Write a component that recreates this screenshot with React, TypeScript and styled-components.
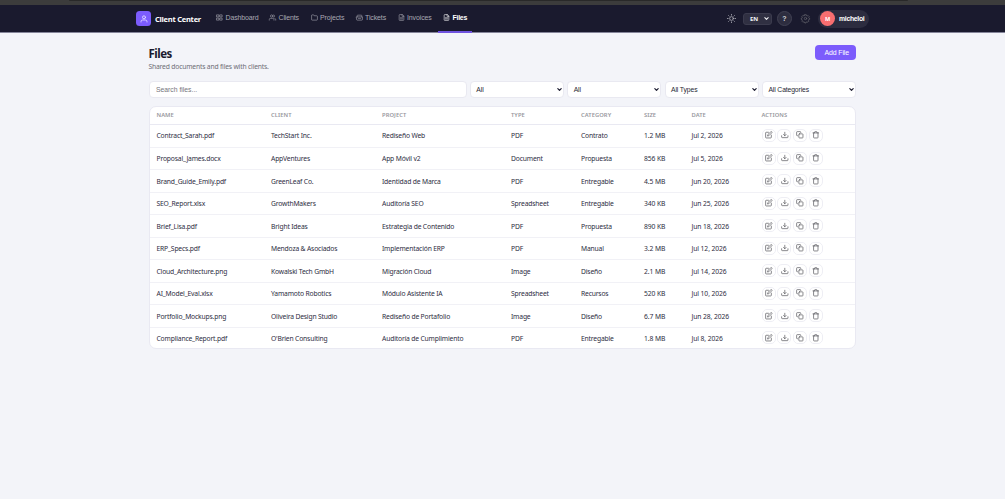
import React from "react";
import styled, { createGlobalStyle } from "styled-components";

const ui = `"Noto Sans", "Open Sans", sans-serif`;
const control = `"Liberation Sans", Arial, sans-serif`;

const Global = createGlobalStyle`
  * { box-sizing: border-box; }
  html, body { margin: 0; height: 100%; background: #f3f4f9; }
  body { font-family: ${ui}; color: #1a1a2e; overflow: hidden; }
  button, input, select { margin: 0; font-family: ${control}; }
`;

const WindowEdge = styled.div`
  height: 5px;
  padding: 0 97px 0 69px;
  background: #3c3c3c;
`;
const WindowEdgeShade = styled.div`
  height: 1px;
  background: #292929;
  border-radius: 0 0 2px 2px;
`;
const Header = styled.header`
  height: 28px;
  background: #1a1a2e;
  border-bottom: 1px solid #85859a;
  display: flex;
  align-items: center;
  padding: 0 136px;
`;
const LogoMark = styled.span`
  width: 15px;
  height: 15px;
  border-radius: 3.5px;
  background: #7c5cfc;
  display: flex;
  align-items: center;
  justify-content: center;
  color: #e4dcff;
`;
const Brand = styled.span`
  width: 55.5px;
  margin-left: 4px;
  font: 700 7.5px ${ui};
  letter-spacing: -0.24px;
  color: #fff;
  white-space: nowrap;
`;
const Nav = styled.nav`
  display: flex;
  align-self: stretch;
`;
const NavItem = styled.a<{ $width: number; $active?: boolean }>`
  width: ${(p) => p.$width}px;
  height: 28px;
  padding: 0 0 1px 5.5px;
  display: flex;
  align-items: center;
  gap: 2.5px;
  font: ${(p) => (p.$active ? 700 : 400)} 7px ${control};
  letter-spacing: ${(p) => (p.$active ? "-0.28px" : "-0.13px")};
  color: ${(p) => (p.$active ? "#fff" : "#a9a9b3")};
  border-bottom: 2px solid ${(p) => (p.$active ? "#6f53df" : "transparent")};
  white-space: nowrap;
`;
const Tools = styled.div`
  margin-left: auto;
  display: flex;
  align-items: center;
  color: #b9b9c2;
`;
const Language = styled.div`
  width: 29px;
  height: 12px;
  margin: 0 5px 0 7px;
  padding: 0 2px 0 6px;
  border: 1px solid #3b3b4d;
  border-radius: 3px;
  background: #303042;
  display: flex;
  align-items: center;
  justify-content: space-between;
  font: 700 6px ${ui};
  color: #f2f2f5;
`;
const Help = styled.button`
  width: 15px;
  height: 15px;
  padding: 0;
  border: 1px solid #414152;
  border-radius: 50%;
  background: #2d2d3f;
  font: 700 7px ${control};
  color: #cfcfd6;
  display: grid;
  place-items: center;
`;
const SettingsIcon = styled.span`
  display: flex;
  margin: 0 8.5px;
  color: #62626b;
`;
const User = styled.div`
  width: 51px;
  height: 18px;
  padding-left: 2px;
  border-radius: 9px;
  background: #2c2c3f;
  display: flex;
  align-items: center;
  gap: 4px;
  font: 700 6.8px ${control};
  letter-spacing: -0.27px;
  color: #fff;
`;
const Avatar = styled.span`
  width: 15px;
  height: 15px;
  border-radius: 50%;
  background: #f86e70;
  display: grid;
  place-items: center;
  font: 700 5.6px ${ui};
`;
const Main = styled.main`
  width: 707.5px;
  margin: 0 0 0 148.5px;
`;
const Heading = styled.div`
  height: 48px;
  display: flex;
  justify-content: space-between;
  padding-top: 12px;
`;
const Title = styled.h1`
  margin: 0;
  padding-top: 1px;
  font: 700 11.5px/16px ${ui};
  letter-spacing: -0.5px;
`;
const Subtitle = styled.p`
  margin: 0;
  font: 400 6.75px/10px ${ui};
  letter-spacing: -0.18px;
  color: #6e6e77;
`;
const AddButton = styled.button`
  width: 41.5px;
  height: 15px;
  padding: 0 0 0 3px;
  border: 0;
  border-radius: 4px;
  background: #7c5cfc;
  color: #fff;
  font: 400 6.9px ${control};
  letter-spacing: -0.08px;
`;
const Filters = styled.div`
  display: grid;
  grid-template-columns: 318px repeat(4, 94px);
  gap: 3.35px;
`;
const filterBox = `
  height: 17px;
  border: 1px solid #e9e9f1;
  border-radius: 4px;
  background: #fff;
  font: 400 6.8px ${control};
`;
const Search = styled.input`
  ${filterBox}
  width: 100%;
  padding: 0 6.5px;
  outline: 0;
  &::placeholder { color: #75757c; opacity: 1; }
`;
const Select = styled.button`
  ${filterBox}
  padding: 0 1px 0 5.5px;
  display: flex;
  align-items: center;
  justify-content: space-between;
  letter-spacing: -0.12px;
  color: #1f1f33;
`;
const Table = styled.section`
  margin-top: 8px;
  height: 243px;
  border: 1px solid #e9e9f2;
  border-radius: 7px;
  background: #fff;
  overflow: hidden;
`;
const Row = styled.div`
  height: 22.47px;
  padding-left: 7px;
  display: grid;
  grid-template-columns: 114.5px 111px 129px 70px 63px 47.5px 70px 1fr;
  align-items: center;
  font: 400 6.75px ${ui};
  letter-spacing: -0.17px;
  color: #2d2d42;
  white-space: nowrap;
  & + & { border-top: 1px solid #f1f1f6; }
`;
const HeadRow = styled(Row)`
  height: 17.5px;
  border-bottom: 1px solid #e9e9f2;
  font: 600 5.8px ${ui};
  letter-spacing: 0.06px;
  color: #98989e;
  & + ${Row} { border-top: 0; }
`;
const Cell = styled.span<{ $numeric?: boolean }>`
  padding-top: 0.4px;
  letter-spacing: ${(p) => (p.$numeric ? "-0.1px" : "inherit")};
`;
const Actions = styled.div`
  display: flex;
  gap: 1.8px;
  padding-bottom: 1px;
`;
const Action = styled.button`
  width: 14px;
  height: 13px;
  padding: 0;
  border: 1px solid #eeeef4;
  border-radius: 5px;
  background: #fff;
  color: #5c5c62;
  display: grid;
  place-items: center;
`;

const shapes = {
  user: <><circle cx="12" cy="7" r="4.5" /><path d="M3 21v-1a5 5 0 0 1 5-5h8a5 5 0 0 1 5 5v1" /></>,
  grid: <><rect x="3" y="3" width="7" height="7" /><rect x="14" y="3" width="7" height="7" /><rect x="3" y="14" width="7" height="7" /><rect x="14" y="14" width="7" height="7" /></>,
  clients: <><circle cx="9" cy="7" r="4" /><path d="M1 21v-2a4 4 0 0 1 4-4h8a4 4 0 0 1 4 4v2M16 3.1a4 4 0 0 1 0 7.8M23 21v-2a4 4 0 0 0-3-3.9" /></>,
  folder: <path d="M22 19a2 2 0 0 1-2 2H4a2 2 0 0 1-2-2V5a2 2 0 0 1 2-2h5l2 3h9a2 2 0 0 1 2 2z" />,
  ticket: <path d="M2 10h20v9a2 2 0 0 1-2 2H4a2 2 0 0 1-2-2zM4 10V6a2 2 0 0 1 2-2h12a2 2 0 0 1 2 2v4M8 15h8" />,
  file: <><path d="M14 2H6a2 2 0 0 0-2 2v16a2 2 0 0 0 2 2h12a2 2 0 0 0 2-2V8z" /><path d="M14 2v6h6M8 13h8M8 17h8" /></>,
  sun: <><circle cx="12" cy="12" r="5" /><path d="M12 1v2M12 21v2M4.2 4.2l1.4 1.4M18.4 18.4l1.4 1.4M1 12h2M21 12h2M4.2 19.8l1.4-1.4M18.4 5.6l1.4-1.4" /></>,
  gear: <><circle cx="12" cy="12" r="3.2" /><path d="M10 1.8h4l.8 2.8 1.7.8 2.6-1.3 2.8 2.8-1.3 2.6.8 1.7 1.8.8v2l-2.6.8-.8 1.7 1.3 2.6-2.8 2.8-2.6-1.3-1.7.8-.8 2.6h-3l-.8-2.6-1.7-.8-2.6 1.3-2.8-2.8 1.3-2.6-.8-1.7-2.3-.8v-2.4l2.3-.8.8-1.7-1.3-2.6 2.8-2.8 2.6 1.3 1.7-.8z" /></>,
  edit: <><path d="M11 4H4a2 2 0 0 0-2 2v14a2 2 0 0 0 2 2h14a2 2 0 0 0 2-2v-7" /><path d="M18.5 2.5a2.1 2.1 0 0 1 3 3L12 15l-4 1 1-4z" /></>,
  download: <path d="M22 15v4a2 2 0 0 1-2 2H4a2 2 0 0 1-2-2v-4M8 11l4 4 4-4M12 15V4" />,
  copy: <><rect x="9" y="9" width="13" height="13" rx="2" /><path d="M5 15H4a2 2 0 0 1-2-2V4a2 2 0 0 1 2-2h9a2 2 0 0 1 2 2v1" /></>,
  trash: <path d="M3 6h18M19 6v14a2 2 0 0 1-2 2H7a2 2 0 0 1-2-2V6M8 6V4a2 2 0 0 1 2-2h4a2 2 0 0 1 2 2v2" />,
  chevron: <path d="M4 8l8 8 8-8" />,
};
type Shape = keyof typeof shapes;

const Glyph = styled.svg`
  flex-shrink: 0;
  overflow: visible;
`;

function Icon({ name, size = 7, weight = 2 }: { name: Shape; size?: number; weight?: number }) {
  return (
    <Glyph width={size} height={size} viewBox="0 0 24 24" fill="none" stroke="currentColor" strokeWidth={weight} strokeLinecap="round" strokeLinejoin="round">
      {shapes[name]}
    </Glyph>
  );
}

const links: [string, Shape, number][] = [
  ["Dashboard", "grid", 53],
  ["Clients", "clients", 41.5],
  ["Projects", "folder", 45],
  ["Tickets", "ticket", 42],
  ["Invoices", "file", 45.5],
  ["Files", "file", 34.5],
];
const columns = ["NAME", "CLIENT", "PROJECT", "TYPE", "CATEGORY", "SIZE", "DATE", "ACTIONS"];
const files = [
  ["Contract_Sarah.pdf", "TechStart Inc.", "Rediseño Web", "PDF", "Contrato", "1.2 MB", "Jul 2, 2026"],
  ["Proposal_James.docx", "AppVentures", "App Móvil v2", "Document", "Propuesta", "856 KB", "Jul 5, 2026"],
  ["Brand_Guide_Emily.pdf", "GreenLeaf Co.", "Identidad de Marca", "PDF", "Entregable", "4.5 MB", "Jun 20, 2026"],
  ["SEO_Report.xlsx", "GrowthMakers", "Auditoría SEO", "Spreadsheet", "Entregable", "340 KB", "Jun 25, 2026"],
  ["Brief_Lisa.pdf", "Bright Ideas", "Estrategia de Contenido", "PDF", "Propuesta", "890 KB", "Jun 18, 2026"],
  ["ERP_Specs.pdf", "Mendoza & Asociados", "Implementación ERP", "PDF", "Manual", "3.2 MB", "Jul 12, 2026"],
  ["Cloud_Architecture.png", "Kowalski Tech GmbH", "Migración Cloud", "Image", "Diseño", "2.1 MB", "Jul 14, 2026"],
  ["AI_Model_Eval.xlsx", "Yamamoto Robotics", "Módulo Asistente IA", "Spreadsheet", "Recursos", "520 KB", "Jul 10, 2026"],
  ["Portfolio_Mockups.png", "Oliveira Design Studio", "Rediseño de Portafolio", "Image", "Diseño", "6.7 MB", "Jun 28, 2026"],
  ["Compliance_Report.pdf", "O'Brien Consulting", "Auditoría de Cumplimiento", "PDF", "Entregable", "1.8 MB", "Jul 8, 2026"],
];
const actions: Shape[] = ["edit", "download", "copy", "trash"];

export default function App() {
  return (
    <>
      <Global />
      <WindowEdge><WindowEdgeShade /></WindowEdge>
      <Header>
        <LogoMark><Icon name="user" size={8} weight={2.6} /></LogoMark>
        <Brand>Client Center</Brand>
        <Nav>
          {links.map(([label, icon, width]) => (
            <NavItem key={label} $width={width} $active={label === "Files"}>
              <Icon name={icon} />{label}
            </NavItem>
          ))}
        </Nav>
        <Tools>
          <Icon name="sun" size={9} />
          <Language>EN<Icon name="chevron" size={5} weight={5} /></Language>
          <Help>?</Help>
          <SettingsIcon><Icon name="gear" size={9} /></SettingsIcon>
          <User><Avatar>M</Avatar>micheloi</User>
        </Tools>
      </Header>
      <Main>
        <Heading>
          <div>
            <Title>Files</Title>
            <Subtitle>Shared documents and files with clients.</Subtitle>
          </div>
          <AddButton>Add File</AddButton>
        </Heading>
        <Filters>
          <Search placeholder="Search files..." />
          {["All", "All", "All Types", "All Categories"].map((label, i) => (
            <Select key={i}>{label}<Icon name="chevron" size={5} weight={6} /></Select>
          ))}
        </Filters>
        <Table>
          <HeadRow>{columns.map((c) => <span key={c}>{c}</span>)}</HeadRow>
          {files.map((file) => (
            <Row key={file[0]}>
              {file.map((value, i) => <Cell key={i} $numeric={i > 4}>{value}</Cell>)}
              <Actions>
                {actions.map((a) => <Action key={a} aria-label={a}><Icon name={a} size={7.6} weight={2.3} /></Action>)}
              </Actions>
            </Row>
          ))}
        </Table>
      </Main>
    </>
  );
}
